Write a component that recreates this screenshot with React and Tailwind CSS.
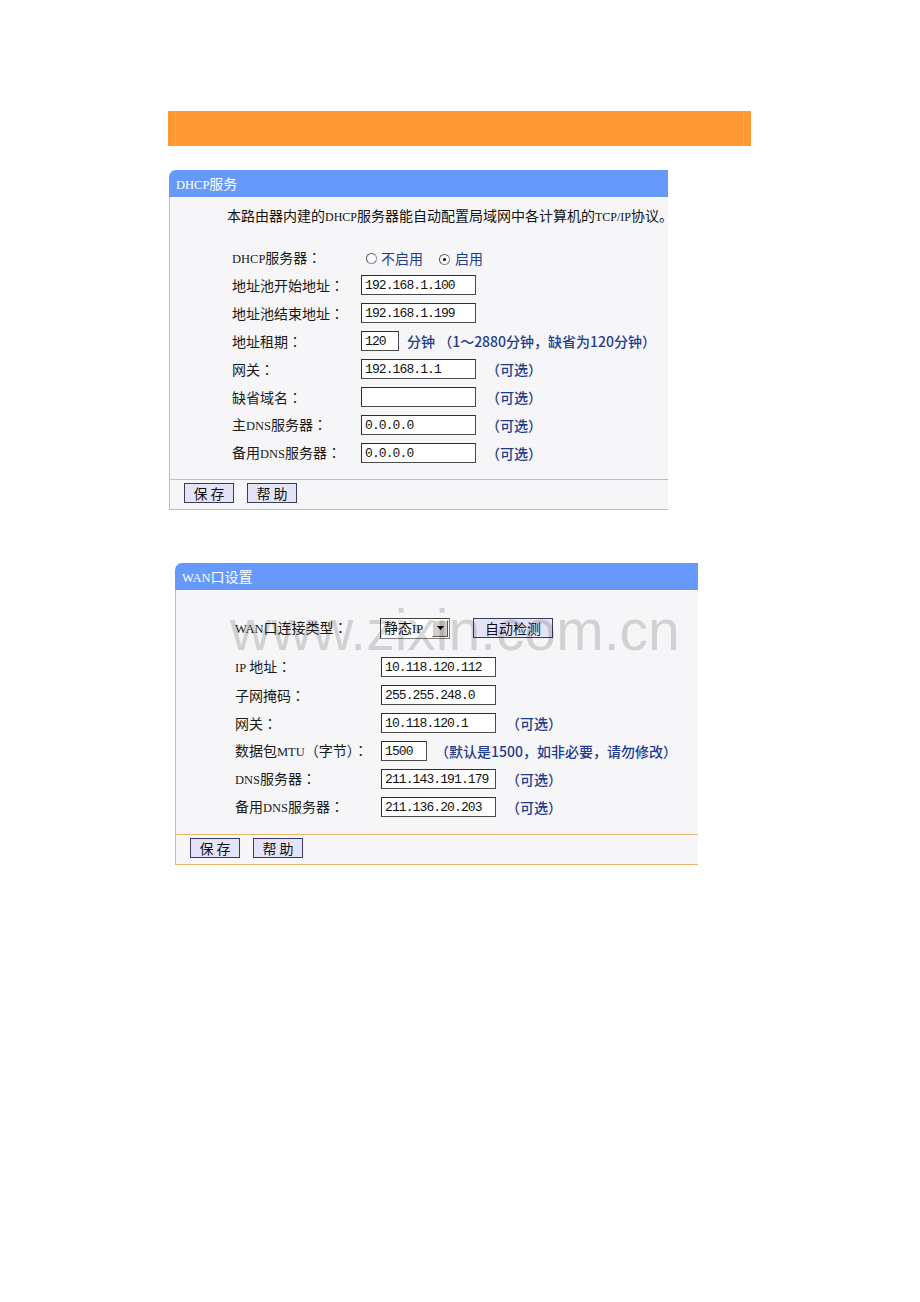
import React from "react";

const CJK = "font-['Noto_Sans_CJK_SC',sans-serif]";
const NAVY = "text-[#1f3c8c]";

function L({ children, s = "text-[12.5px]" }) {
  return <span className={`font-['Liberation_Serif',serif] ${s}`}>{children}</span>;
}

function C() {
  return <span className="font-['Noto_Sans_CJK_TC',sans-serif]">：</span>;
}

function Field({ value, w = "w-[115px]" }) {
  return (
    <div className={`${w} h-[20px] bg-white border border-[#4a4a4a] border-t-[#2e2e2e] border-l-[#2e2e2e] flex items-center pl-[3px] font-['Liberation_Mono',monospace] text-[13px] tracking-[-0.9px] text-[#111] leading-none`}>
      {value}
    </div>
  );
}

function Opt() {
  return <span className={`${NAVY} font-medium text-[14px] ml-[10px]`}>（可选）</span>;
}

function Btn({ children, w = "w-[50px]" }) {
  return (
    <div className={`${w} h-[20px] bg-[#e4e4f8] border border-[#3a3a5a] flex items-center justify-center text-[14px] text-[#111] leading-none`}>
      {children}
    </div>
  );
}

function Radio({ checked }) {
  return (
    <span className="relative inline-block w-[11px] h-[11px] rounded-full bg-white border border-[#8a8a8a] border-t-[#555] border-l-[#555]">
      {checked && <span className="absolute left-[3px] top-[3px] w-[3px] h-[3px] rounded-full bg-black" />}
    </span>
  );
}

function Row({ label, labelW, h = "h-[28px]", children }) {
  return (
    <div className={`${h} flex items-center`}>
      <div className={`${labelW} shrink-0 text-[14px] text-[#1a1a1a] leading-none whitespace-nowrap`}>{label}</div>
      <div className="flex items-center">{children}</div>
    </div>
  );
}

function Panel({ title, width, children, buttonsPad }) {
  return (
    <div className={`${width}`}>
      <div className="h-[27px] bg-[#6699fb] rounded-tl-[7px] flex items-center pl-[7px] text-white text-[14px] leading-none">
        {title}
      </div>
      <div className="border-l border-[#ecb671] bg-[#f6f6f8]">
        {children}
        <div className={`border-t border-b border-[#ecb671] h-[31px] flex items-start pt-[3px] ${buttonsPad} gap-[13px]`}>
          <Btn>保&nbsp;存</Btn>
          <Btn>帮&nbsp;助</Btn>
        </div>
      </div>
    </div>
  );
}

export default function App() {
  return (
    <div className={`relative w-[920px] h-[1302px] bg-white pt-[111px] ${CJK}`}>
      <div className="ml-[168px] w-[583px] h-[35px] bg-[#ff9933] px-[7px]">
        <div className="h-full border-x border-[#ffab58]" />
      </div>

      <div className="ml-[169px] mt-[24px]">
        <Panel
          width="w-[499px]"
          buttonsPad="pl-[14px]"
          title={<span><L>DHCP</L>服务</span>}
        >
          <div className="pt-[8px] pb-[12px]">
            <div className="pl-[57px] h-[20px] flex items-center text-[14px] text-[#111] whitespace-nowrap leading-none">
              <span>
                本路由器内建的<L s="text-[12px]">DHCP</L>服务器能自动配置局域网中各计算机的<L s="text-[12px]">TCP/IP</L>协议。
              </span>
            </div>
            <div className="pl-[62px] pt-[20px]">
              <Row label={<><L>DHCP</L>服务器<C /></>} labelW="w-[134px]" h="h-[26px]">
                <Radio />
                <span className="ml-[4px] text-[14px] text-[#1f3c8c] leading-none">不启用</span>
                <span className="ml-[16px]"><Radio checked /></span>
                <span className="ml-[5px] text-[14px] text-[#1f3c8c] leading-none">启用</span>
              </Row>
              <Row label={<>地址池开始地址<C /></>} labelW="w-[129px]">
                <Field value="192.168.1.100" />
              </Row>
              <Row label={<>地址池结束地址<C /></>} labelW="w-[129px]">
                <Field value="192.168.1.199" />
              </Row>
              <Row label={<>地址租期<C /></>} labelW="w-[129px]">
                <Field value="120" w="w-[38px]" />
                <span className={`${NAVY} font-medium text-[14px] ml-[8px] whitespace-nowrap`}>分钟&nbsp;（1～2880分钟，缺省为120分钟）</span>
              </Row>
              <Row label={<>网关<C /></>} labelW="w-[129px]">
                <Field value="192.168.1.1" />
                <Opt />
              </Row>
              <Row label={<>缺省域名<C /></>} labelW="w-[129px]">
                <Field value="" />
                <Opt />
              </Row>
              <Row label={<>主<L>DNS</L>服务器<C /></>} labelW="w-[129px]">
                <Field value="0.0.0.0" />
                <Opt />
              </Row>
              <Row label={<>备用<L>DNS</L>服务器<C /></>} labelW="w-[129px]">
                <Field value="0.0.0.0" />
                <Opt />
              </Row>
            </div>
          </div>
        </Panel>
      </div>

      <div className="ml-[175px] mt-[53px]">
        <Panel
          width="w-[523px]"
          buttonsPad="pl-[14px]"
          title={<span><L>WAN</L>口设置</span>}
        >
          <div className="pt-[24px] pb-[13px] pl-[59px]">
            <Row label={<><L>WAN</L>口连接类型<C /></>} labelW="w-[145px]">
              <div className="w-[70px] h-[21px] bg-white border border-[#808080] border-t-[#404040] border-l-[#404040] flex items-center">
                <span className="flex-1 pl-[3px] text-[14px] text-[#111] leading-none whitespace-nowrap">静态<L>IP</L></span>
                <span className="w-[16px] h-[17px] mr-[1px] bg-[#d4d0c8] border border-[#fff] border-r-[#555] border-b-[#555] flex items-center justify-center">
                  <svg width="7" height="4" viewBox="0 0 7 4"><path d="M0 0H7L3.5 4Z" fill="#000" /></svg>
                </span>
              </div>
              <div className="ml-[23px]">
                <Btn w="w-[80px]">自动检测</Btn>
              </div>
            </Row>
            <div className="h-[11px]" />
            <Row label={<><L>IP</L>&nbsp;地址<C /></>} labelW="w-[146px]">
              <Field value="10.118.120.112" />
            </Row>
            <Row label={<>子网掩码<C /></>} labelW="w-[146px]">
              <Field value="255.255.248.0" />
            </Row>
            <Row label={<>网关<C /></>} labelW="w-[146px]">
              <Field value="10.118.120.1" />
              <Opt />
            </Row>
            <Row label={<>数据包<L>MTU</L>（字节）<C /></>} labelW="w-[146px]">
              <Field value="1500" w="w-[46px]" />
              <span className={`${NAVY} font-medium text-[14px] ml-[8px] whitespace-nowrap`}>（默认是1500，如非必要，请勿修改）</span>
            </Row>
            <Row label={<><L>DNS</L>服务器<C /></>} labelW="w-[146px]">
              <Field value="211.143.191.179" />
              <Opt />
            </Row>
            <Row label={<>备用<L>DNS</L>服务器<C /></>} labelW="w-[146px]">
              <Field value="211.136.20.203" />
              <Opt />
            </Row>
          </div>
        </Panel>
      </div>

      <div className="pointer-events-none absolute left-[230px] top-[602px] font-['Liberation_Sans',sans-serif] text-[57px] leading-none text-black/15 whitespace-nowrap">
        www.zixin.com.cn
      </div>
    </div>
  );
}
